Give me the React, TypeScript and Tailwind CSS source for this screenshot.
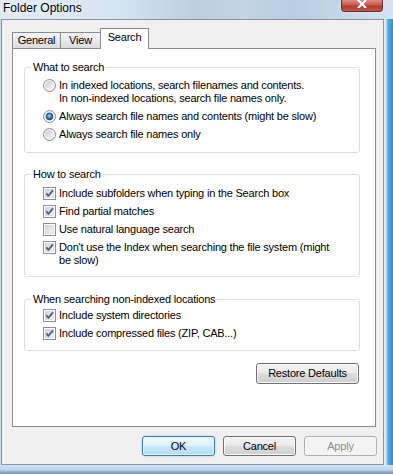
import type { ReactNode } from "react";

/* ---------- controls ---------- */

function Radio({ checked }: { checked?: boolean }) {
  return (
    <svg width="13" height="13" viewBox="0 0 13 13" className="shrink-0">
      <defs>
        <linearGradient id="rb-face" x1="0" y1="0" x2="1" y2="1">
          <stop offset="0" stopColor="#c9ccd1" />
          <stop offset="1" stopColor="#fbfbfb" />
        </linearGradient>
        <radialGradient id="rb-dot" cx="0.45" cy="0.4" r="0.65">
          <stop offset="0" stopColor="#9fdcf8" />
          <stop offset="0.45" stopColor="#3b8cc6" />
          <stop offset="1" stopColor="#143c68" />
        </radialGradient>
      </defs>
      <circle cx="6.5" cy="6.5" r="6" fill="#f5f5f5" stroke="#8a8c8f" />
      <circle cx="6.5" cy="6.5" r="4.5" fill="url(#rb-face)" />
      {checked && (
        <circle cx="6.5" cy="6.5" r="3.4" fill="url(#rb-dot)" stroke="#1b4774" strokeWidth="0.7" />
      )}
    </svg>
  );
}

function Check({ checked }: { checked?: boolean }) {
  return (
    <svg width="13" height="13" viewBox="0 0 13 13" className="shrink-0">
      <defs>
        <linearGradient id="cb-face" x1="0" y1="0" x2="1" y2="1">
          <stop offset="0" stopColor="#cdd0d4" />
          <stop offset="1" stopColor="#f8f8f8" />
        </linearGradient>
      </defs>
      <rect x="0.5" y="0.5" width="12" height="12" fill="#fff" stroke="#8e8f91" />
      <rect x="2.5" y="2.5" width="8" height="8" fill="url(#cb-face)" stroke="#bfc2c6" strokeWidth="0.5" />
      {checked && (
        <path
          d="M3.3 6.4 L5.4 8.9 L9.9 3.4"
          fill="none"
          stroke="#4b5e8c"
          strokeWidth="1.8"
          strokeLinejoin="round"
        />
      )}
    </svg>
  );
}

function Option({ control, children }: { control: ReactNode; children: ReactNode }) {
  return (
    <div className="flex items-start gap-[3px] leading-[13px]">
      {control}
      <span>{children}</span>
    </div>
  );
}

function Group({
  title,
  className,
  children,
}: {
  title: string;
  className: string;
  children: ReactNode;
}) {
  return (
    <fieldset
      className={`ml-[11px] w-[336px] rounded-[3px] border border-[#d5dfe5] ${className}`}
    >
      <legend className="ml-[6px] px-[2px] leading-[13px]">{title}</legend>
      <div className="flex flex-col gap-[5px] pl-[18px]">{children}</div>
    </fieldset>
  );
}

/* ---------- buttons ---------- */

type ButtonKind = "normal" | "default" | "disabled";

const BUTTON_KINDS: Record<ButtonKind, string> = {
  normal:
    "border-[#707070] text-black bg-[linear-gradient(to_bottom,#f2f2f2_0%,#ebebeb_50%,#dddddd_50%,#cfcfcf_100%)] shadow-[inset_0_0_0_1px_#fbfbfb]",
  default:
    "border-[#3c7fb1] text-black bg-[linear-gradient(to_bottom,#eef8fd_0%,#dcf1fc_50%,#c6e8fa_50%,#b4dcf3_100%)] shadow-[inset_0_0_0_1px_#e6f5fd,0_0_2px_#7fc4ea]",
  disabled: "border-[#adb2b5] text-[#8d8d8d] bg-[#f4f4f4]",
};

function Button({
  children,
  kind = "normal",
  className,
}: {
  children: ReactNode;
  kind?: ButtonKind;
  className: string;
}) {
  return (
    <div
      className={`flex items-center justify-center rounded-[3px] border leading-[13px] ${BUTTON_KINDS[kind]} ${className}`}
    >
      {children}
    </div>
  );
}

/* ---------- window ---------- */

export default function App() {
  return (
    <div className="flex h-[474px] w-[393px] flex-col overflow-hidden bg-[#cddff0] font-['Liberation_Sans',Arial,sans-serif] text-[11px] tracking-[-0.2px] text-black">
      {/* title bar */}
      <div className="flex h-[19px] shrink-0 justify-between bg-[linear-gradient(to_right,#e2ecf5_0%,#d6e4f1_30%,#bccfe1_50%,#c2d5e7_62%,#b7cde2_75%,#d3e3f1_100%)]">
        <span className="pl-[3px] pt-[1px] text-[12px] leading-[15px] tracking-normal [text-shadow:0_0_5px_#ffffff]">
          Folder Options
        </span>
        <div className="mr-[10px] flex h-[12px] w-[42px] items-start justify-center rounded-b-[4px] border border-t-0 border-[#6e2a24] bg-[linear-gradient(to_bottom,#d98c80_0%,#c85a4b_45%,#b03a2c_55%,#c4584a_100%)] shadow-[0_0_2px_#ffffff]">
          <svg width="12" height="8" viewBox="0 0 12 8">
            <path d="M2 0 L10 8 M10 0 L2 8" stroke="#ffffff" strokeWidth="2.2" />
          </svg>
        </div>
      </div>

      {/* middle */}
      <div className="flex h-[446px] shrink-0">
        <div className="w-[1px] bg-[#c7d9ea]" />
        <div className="flex h-[446px] w-[383px] flex-col border border-[#8796a5] bg-[#f0f0f0] pb-[8px] pl-[10px] pr-[7px] pt-[8px]">
          {/* tabs */}
          <div className="flex h-[20px] items-end">
            <div className="flex h-[16px] w-[49px] items-center justify-center border border-b-0 border-[#898c95] bg-[linear-gradient(to_bottom,#f5f5f5,#dcdcdc)]">
              General
            </div>
            <div className="-ml-[1px] flex h-[16px] w-[41px] items-center justify-center border border-b-0 border-[#898c95] bg-[linear-gradient(to_bottom,#f5f5f5,#dcdcdc)]">
              View
            </div>
            <div className="relative z-10 -mb-[1px] -ml-[1px] flex h-[21px] w-[49px] items-center justify-center border border-b-0 border-[#898c95] bg-white pb-[3px]">
              Search
            </div>
          </div>

          {/* panel */}
          <div className="flex w-[364px] flex-1 flex-col border border-[#898c95] bg-white">
            <Group title="What to search" className="mt-[12px] h-[92px] pt-[5px]">
              <Option control={<Radio />}>
                In indexed locations, search filenames and contents.
                <br />
                In non-indexed locations, search file names only.
              </Option>
              <Option control={<Radio checked />}>
                Always search file names and contents (might be slow)
              </Option>
              <Option control={<Radio />}>Always search file names only</Option>
            </Group>

            <Group title="How to search" className="mt-[15px] h-[109px] pt-[6px]">
              <Option control={<Check checked />}>
                Include subfolders when typing in the Search box
              </Option>
              <Option control={<Check checked />}>Find partial matches</Option>
              <Option control={<Check />}>Use natural language search</Option>
              <Option control={<Check checked />}>
                Don't use the Index when searching the file system (might
                <br />
                be slow)
              </Option>
            </Group>

            <Group
              title="When searching non-indexed locations"
              className="mt-[16px] h-[58px] pt-[3px]"
            >
              <Option control={<Check checked />}>Include system directories</Option>
              <Option control={<Check checked />}>
                Include compressed files (ZIP, CAB...)
              </Option>
            </Group>

            <Button className="mr-[16px] mt-[12px] h-[21px] w-[103px] self-end">
              Restore Defaults
            </Button>
          </div>

          {/* dialog buttons */}
          <div className="-mr-[1px] mt-[9px] flex justify-end gap-[8px]">
            <Button kind="default" className="h-[20px] w-[73px]">
              OK
            </Button>
            <Button className="h-[20px] w-[73px]">Cancel</Button>
            <Button kind="disabled" className="h-[20px] w-[73px]">
              Apply
            </Button>
          </div>
        </div>
        <div className="flex-1 bg-[linear-gradient(to_right,#e4edf6_0%,#cfe1f1_25%,#5cb0e4_40%,#2d8fd6_100%)]" />
      </div>

      {/* bottom frame */}
      <div className="flex-1 bg-[linear-gradient(to_bottom,#d3e3f1_0%,#c1d6ea_50%,#6f8ea9_100%)]" />
    </div>
  );
}
